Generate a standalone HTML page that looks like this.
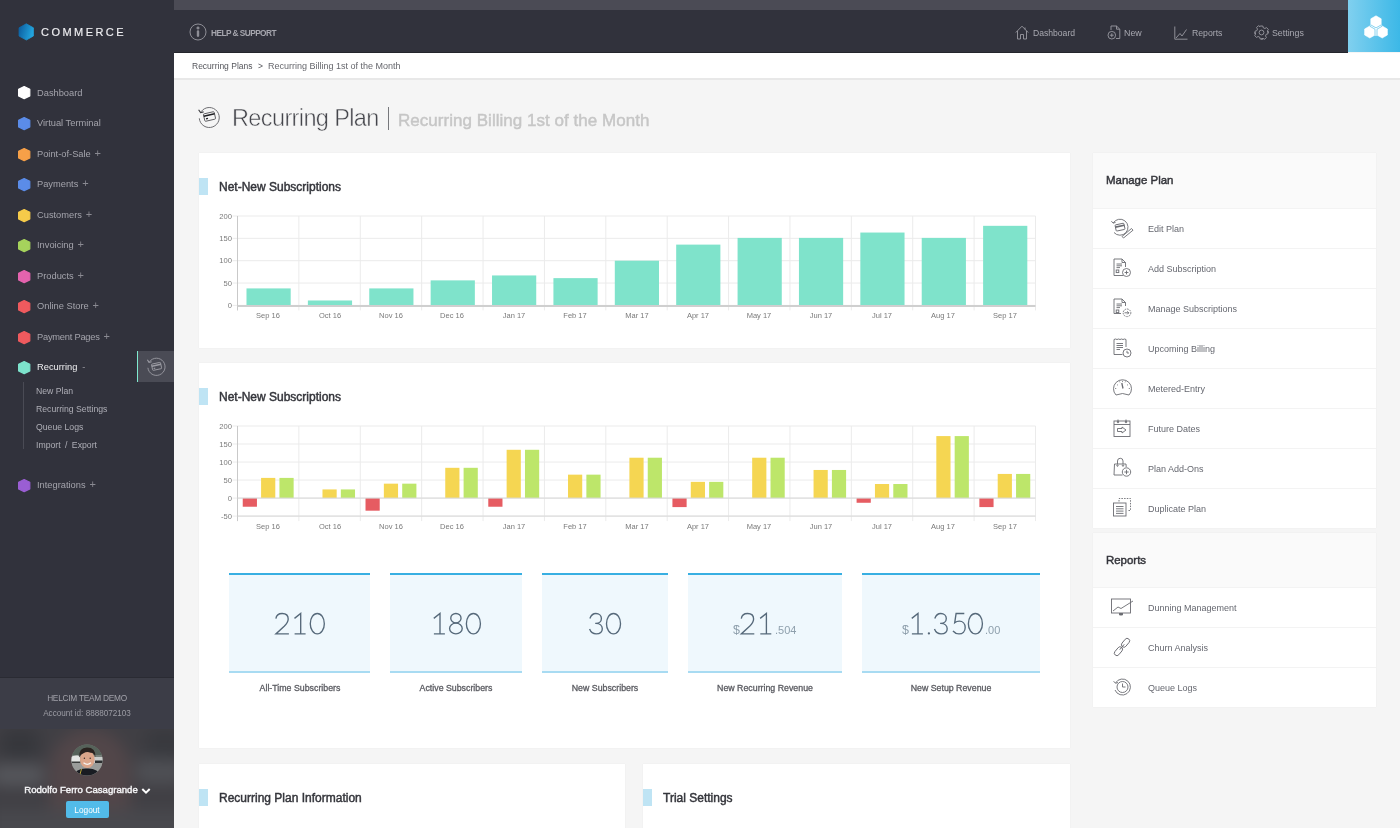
<!DOCTYPE html><html><head><meta charset="utf-8"><style>
*{margin:0;padding:0;box-sizing:border-box}
html,body{width:1400px;height:828px;overflow:hidden;background:#f5f5f5;font-family:"Liberation Sans",sans-serif;position:relative}
div,span{white-space:nowrap}
.ab{position:absolute}
.t{position:absolute;line-height:1;white-space:nowrap;will-change:transform}
#side{position:absolute;left:0;top:0;width:174px;height:828px;background:#31323c}
#top{position:absolute;left:174px;top:0;width:1174px;height:53px;background:#31323c;border-bottom:1.5px solid #24252c}
#topstrip{position:absolute;left:0;top:0;width:1174px;height:10px;background:#4b4b55}
#cube{position:absolute;left:1348px;top:0;width:52px;height:52px;background:linear-gradient(90deg,#80d0ef,#3cb8e7)}
#crumb{position:absolute;left:174px;top:53px;width:1226px;height:27px;background:#fff;border-bottom:2px solid #e8e8e8}
.card{position:absolute;background:#fff;box-shadow:0 0 1px rgba(0,0,0,0.08)}
.mark{position:absolute;left:0;width:9px;height:17px;background:#bfe4f4}
.ctitle{font-size:12px;color:#34353b;-webkit-text-stroke:0.45px #34353b}
.nav{font-size:9.3px;color:#a4a4ac}
.sub{font-size:8.7px;color:#aeaeb6}
.plus{color:#8a8a92;margin-left:3.8px;font-size:11px;line-height:0;position:relative;top:0.3px}
.panel{position:absolute;left:1093px;width:283px;background:#fff;box-shadow:0 0 1px rgba(0,0,0,0.08)}
.phead{position:absolute;left:0;top:0;width:283px;background:#fafafa}
.ptitle{font-size:11.7px;color:#34353b;-webkit-text-stroke:0.45px #34353b}
.pitem{position:absolute;left:0;width:283px;height:40px;border-top:1px solid #f3f3f3}
.pl{font-size:9px;color:#666870}
.stat{position:absolute;top:573px;height:100px;background:#eff8fd;border-top:2px solid #38afe2;border-bottom:2px solid #a8dbf2}
.num{font-size:30px;color:#71828f}
.slbl{font-size:8.8px;color:#5a5b61;-webkit-text-stroke:0.3px #5a5b61}
.cl{font-size:7.6px;color:#7a7a7a}
.ic{position:absolute;overflow:visible}
</style></head><body>
<div id="side"></div>
<svg class="ic" style="left:18px;top:23px" width="17" height="18" viewBox="0 0 17 18">
<defs><linearGradient id="lg" x1="0" y1="0" x2="1" y2="0.3"><stop offset="0" stop-color="#0b5a9c"/><stop offset="1" stop-color="#22a3dc"/></linearGradient></defs>
<path d="M8.3 0.8 L15.4 4.8 L15.4 13 L8.3 17 L1 13 L1 4.8 Z" fill="url(#lg)" stroke="url(#lg)" stroke-width="0.8" stroke-linejoin="round"/></svg>
<div class="t " style="left:41px;top:26.52px;font-size:11px;color:#f0f0f3;letter-spacing:2.45px;-webkit-text-stroke:0.15px #f0f0f3">COMMERCE</div>
<svg class="ic" style="left:18.00px;top:86.30px" width="12.4" height="13.2"><polygon points="6.20,0.6 11.80,3.30 11.80,9.90 6.20,12.60 0.6,9.90 0.6,3.30" fill="#ffffff" stroke="#ffffff" stroke-width="1.2" stroke-linejoin="round"/></svg>
<div class="t nav" style="left:37px;top:88.54px;font-size:9.3px;">Dashboard</div>
<svg class="ic" style="left:18.00px;top:117.00px" width="12.4" height="13.2"><polygon points="6.20,0.6 11.80,3.30 11.80,9.90 6.20,12.60 0.6,9.90 0.6,3.30" fill="#5b8ce8" stroke="#5b8ce8" stroke-width="1.2" stroke-linejoin="round"/></svg>
<div class="t nav" style="left:37px;top:119.24px;font-size:9.3px;">Virtual Terminal</div>
<svg class="ic" style="left:18.00px;top:147.50px" width="12.4" height="13.2"><polygon points="6.20,0.6 11.80,3.30 11.80,9.90 6.20,12.60 0.6,9.90 0.6,3.30" fill="#f7a048" stroke="#f7a048" stroke-width="1.2" stroke-linejoin="round"/></svg>
<div class="t nav" style="left:37px;top:149.74px;font-size:9.3px;">Point-of-Sale<span class="plus">+</span></div>
<svg class="ic" style="left:18.00px;top:178.00px" width="12.4" height="13.2"><polygon points="6.20,0.6 11.80,3.30 11.80,9.90 6.20,12.60 0.6,9.90 0.6,3.30" fill="#5b8ce8" stroke="#5b8ce8" stroke-width="1.2" stroke-linejoin="round"/></svg>
<div class="t nav" style="left:37px;top:180.24px;font-size:9.3px;">Payments<span class="plus">+</span></div>
<svg class="ic" style="left:18.00px;top:208.50px" width="12.4" height="13.2"><polygon points="6.20,0.6 11.80,3.30 11.80,9.90 6.20,12.60 0.6,9.90 0.6,3.30" fill="#f6cb4a" stroke="#f6cb4a" stroke-width="1.2" stroke-linejoin="round"/></svg>
<div class="t nav" style="left:37px;top:210.74px;font-size:9.3px;">Customers<span class="plus">+</span></div>
<svg class="ic" style="left:18.00px;top:239.00px" width="12.4" height="13.2"><polygon points="6.20,0.6 11.80,3.30 11.80,9.90 6.20,12.60 0.6,9.90 0.6,3.30" fill="#a6d35c" stroke="#a6d35c" stroke-width="1.2" stroke-linejoin="round"/></svg>
<div class="t nav" style="left:37px;top:241.24px;font-size:9.3px;">Invoicing<span class="plus">+</span></div>
<svg class="ic" style="left:18.00px;top:269.50px" width="12.4" height="13.2"><polygon points="6.20,0.6 11.80,3.30 11.80,9.90 6.20,12.60 0.6,9.90 0.6,3.30" fill="#e463ae" stroke="#e463ae" stroke-width="1.2" stroke-linejoin="round"/></svg>
<div class="t nav" style="left:37px;top:271.74px;font-size:9.3px;">Products<span class="plus">+</span></div>
<svg class="ic" style="left:18.00px;top:300.00px" width="12.4" height="13.2"><polygon points="6.20,0.6 11.80,3.30 11.80,9.90 6.20,12.60 0.6,9.90 0.6,3.30" fill="#ef5a5e" stroke="#ef5a5e" stroke-width="1.2" stroke-linejoin="round"/></svg>
<div class="t nav" style="left:37px;top:302.24px;font-size:9.3px;">Online Store<span class="plus">+</span></div>
<svg class="ic" style="left:18.00px;top:330.50px" width="12.4" height="13.2"><polygon points="6.20,0.6 11.80,3.30 11.80,9.90 6.20,12.60 0.6,9.90 0.6,3.30" fill="#ef5a5e" stroke="#ef5a5e" stroke-width="1.2" stroke-linejoin="round"/></svg>
<div class="t nav" style="left:37px;top:332.74px;font-size:9.3px;"><span style="letter-spacing:-0.23px">Payment Pages</span><span class="plus">+</span></div>
<svg class="ic" style="left:18.00px;top:361.10px" width="12.4" height="13.2"><polygon points="6.20,0.6 11.80,3.30 11.80,9.90 6.20,12.60 0.6,9.90 0.6,3.30" fill="#7de3cc" stroke="#7de3cc" stroke-width="1.2" stroke-linejoin="round"/></svg>
<div class="t " style="left:37px;top:363.14px;font-size:9.3px;color:#eeeef0;font-weight:normal">Recurring<span style="color:#9a9aa2;margin-left:5px">-</span></div>
<div class="ab" style="left:23px;top:382px;width:1px;height:67px;background:#4a4b55"></div>
<div class="t sub" style="left:36px;top:386.82px;font-size:8.7px;">New Plan</div>
<div class="t sub" style="left:36px;top:404.82px;font-size:8.7px;">Recurring Settings</div>
<div class="t sub" style="left:36px;top:422.82px;font-size:8.7px;">Queue Logs</div>
<div class="t sub" style="left:36px;top:440.82px;font-size:8.7px;"><span style="word-spacing:2px">Import / Export</span></div>
<svg class="ic" style="left:18.00px;top:478.90px" width="12.4" height="13.2"><polygon points="6.20,0.6 11.80,3.30 11.80,9.90 6.20,12.60 0.6,9.90 0.6,3.30" fill="#9a5ed3" stroke="#9a5ed3" stroke-width="1.2" stroke-linejoin="round"/></svg>
<div class="t nav" style="left:37px;top:481.24px;font-size:9.3px;">Integrations<span class="plus">+</span></div>
<div class="ab" style="left:137px;top:351px;width:37px;height:31px;background:#4a4b55;border-left:1.6px solid #7feacf"></div>
<svg class="ic" style="left:146px;top:356px" width="20" height="20" viewBox="0 0 20 20" fill="none" stroke="#9c9ca4" stroke-width="0.9">
<path d="M1.9 11.8 A8.6 8.6 0 1 0 3.6 5.6"/><path d="M1.4 3.8 L3.0 6.3 L5.6 5.7" stroke-width="1.1"/>
<g transform="rotate(-12 10.5 10.5)"><rect x="6" y="7.2" width="9.2" height="6.4" rx="0.8"/><path d="M6 9.2 H15.2" stroke-width="1.5"/><rect x="7.3" y="11.3" width="1.6" height="1.1" fill="#9c9ca4" stroke="none"/></g></svg>
<div class="ab" style="left:0;top:677px;width:174px;height:1px;background:#2a2b33"></div>
<div class="ab" style="left:0;top:678px;width:174px;height:51px;background:#3c3d47"></div>
<div class="t " style="left:-213px;width:600px;text-align:center;top:693.72px;font-size:8.3px;color:#a0a0a8;letter-spacing:-0.25px">HELCIM TEAM DEMO</div>
<div class="t " style="left:-213px;width:600px;text-align:center;top:709.69px;font-size:8.15px;color:#9c9ca4">Account id: 8888072103</div>
<div class="ab" style="left:0;top:729px;width:174px;height:99px;overflow:hidden;background:#403f44">
<div class="ab" style="left:-30px;top:-20px;width:234px;height:140px;filter:blur(8px);background:#403f44">
<div class="ab" style="left:80px;top:20px;width:80px;height:120px;border-radius:40px;background:#524649"></div>
<div class="ab" style="left:20px;top:55px;width:55px;height:22px;border-radius:10px;background:#56575c"></div>
<div class="ab" style="left:165px;top:50px;width:50px;height:25px;border-radius:10px;background:#4f5055"></div>
<div class="ab" style="left:20px;top:100px;width:200px;height:40px;background:#48484d"></div>
<div class="ab" style="left:30px;top:20px;width:40px;height:30px;border-radius:10px;background:#36373c"></div>
<div class="ab" style="left:175px;top:20px;width:40px;height:30px;border-radius:10px;background:#38393e"></div>
</div>
</div>
<svg class="ic" style="left:71px;top:744px" width="32" height="32" viewBox="0 0 32 32">
<defs><clipPath id="avc"><circle cx="16" cy="16" r="15.6"/></clipPath></defs>
<g clip-path="url(#avc)">
<rect width="32" height="32" fill="#77807a"/>
<rect x="0" y="0" width="32" height="11" fill="#56625a"/>
<path d="M0 13 Q2 11 7 11.5 L9 13 V19 H0 Z" fill="#e4e6e4"/>
<rect x="0" y="17.5" width="9" height="2" fill="#3a3d3c"/>
<path d="M23 13 H32 V19 H23 Z" fill="#c9cccb"/><rect x="24" y="16.5" width="8" height="2.5" fill="#2c2f30"/>
<rect x="0" y="19" width="32" height="13" fill="#9a9c9a"/>
<path d="M2 32 Q5 24 16 24.5 Q27 24 30 32 Z" fill="#191c22"/>
<path d="M10.5 25 L8.5 32" stroke="#b9a53a" stroke-width="1"/>
<ellipse cx="16.3" cy="15.3" rx="7.3" ry="8.8" fill="#dba58a"/>
<path d="M8.3 13.5 Q7.5 3.8 16 3.6 Q25 3.6 24.4 13.5 Q23.5 8.5 19.5 8.8 Q16 7.2 12.5 9.3 Q9.5 10 8.3 13.5 Z" fill="#2a221f"/>
<path d="M12.5 18.8 Q16.3 21.8 20 18.8" stroke="#f6f2f0" stroke-width="1.2" fill="none"/>
<circle cx="13.4" cy="14.2" r="0.7" fill="#3a2a25"/><circle cx="19.2" cy="14.2" r="0.7" fill="#3a2a25"/>
</g></svg>
<div class="t " style="left:-219px;width:600px;text-align:center;top:785.19px;font-size:9.6px;color:#f4f4f6;-webkit-text-stroke:0.4px #f4f4f6">Rodolfo Ferro Casagrande</div>
<svg class="ic" style="left:141px;top:787px" width="10" height="8" viewBox="0 0 10 8"><path d="M1.3 2 L5 5.6 L8.7 2" stroke="#fff" stroke-width="2" fill="none"/></svg>
<div class="ab" style="left:66px;top:801px;width:42.5px;height:17px;background:#52bbe9;border-radius:2px"></div>
<div class="t " style="left:-213px;width:600px;text-align:center;top:805.62px;font-size:8.3px;color:#fff">Logout</div>
<div id="top"><div id="topstrip"></div></div>
<div id="cube"></div>
<svg class="ic" style="left:189px;top:23px" width="18" height="18" viewBox="0 0 18 18" fill="none" stroke="#8e8e96" stroke-width="1">
<circle cx="9" cy="9" r="8"/><circle cx="9" cy="5" r="1.1" fill="#8e8e96"/><rect x="7.8" y="7.3" width="2.4" height="6.6" rx="1.1" fill="#8e8e96" stroke="none"/></svg>
<div class="t " style="left:211px;top:28.82px;font-size:8.3px;color:#a6a6ae;font-weight:bold;letter-spacing:-0.55px">HELP &amp; SUPPORT</div>
<svg class="ic" style="left:1015px;top:25px" width="14" height="15" viewBox="0 0 14 15" fill="none" stroke="#9a9aa2" stroke-width="0.9">
<path d="M0.8 7.5 L7 1.2 L13.2 7.5"/><path d="M2.5 6 V14 H5.5 V9.5 H8.5 V14 H11.5 V6"/><path d="M10 2.5 V4.5"/></svg>
<div class="t " style="left:1033px;top:28.87px;font-size:8.6px;color:#a9a9b1">Dashboard</div>
<svg class="ic" style="left:1107px;top:25px" width="14" height="15" viewBox="0 0 14 15" fill="none" stroke="#9a9aa2" stroke-width="0.9">
<path d="M4 5 V1 H9.5 L12.8 4.2 V13.5 H9"/><path d="M9.5 1 V4.2 H12.8"/><circle cx="4.8" cy="10.2" r="3.8"/><path d="M4.8 8.3 V12.1 M2.9 10.2 H6.7"/></svg>
<div class="t " style="left:1124px;top:28.75px;font-size:8.85px;color:#a9a9b1">New</div>
<svg class="ic" style="left:1174px;top:26px" width="14" height="14" viewBox="0 0 14 14" fill="none" stroke="#9a9aa2" stroke-width="0.9">
<path d="M0.8 0.5 V13.2 H13.5"/><path d="M2 12 L6 7.5 L8 10 L12.5 3.5"/></svg>
<div class="t " style="left:1191.5px;top:28.82px;font-size:8.7px;color:#a9a9b1">Reports</div>
<svg class="ic" style="left:1254px;top:25px" width="15" height="15" viewBox="0 0 15 15" fill="none" stroke="#9a9aa2" stroke-width="0.9">
<path d="M6.2 1 H8.8 L9.3 2.8 L10.9 3.5 L12.5 2.6 L14.3 4.4 L13.4 6 L14 7.6 L14.3 7.6 V7.4 L14 6.2 V8.8 L12.2 9.3 L11.5 10.9 L12.4 12.5 L10.6 14.3 L9 13.4 L7.4 14 L8.8 14 H6.2 L5.7 12.2 L4.1 11.5 L2.5 12.4 L0.7 10.6 L1.6 9 L1 7.4 V8.8 V6.2 L2.8 5.7 L3.5 4.1 L2.6 2.5 L4.4 0.7 L6 1.6 Z" stroke-linejoin="round"/><circle cx="7.5" cy="7.5" r="2.4"/></svg>
<div class="t " style="left:1271.5px;top:28.78px;font-size:8.8px;color:#a9a9b1">Settings</div>
<svg class="ic" style="left:1364px;top:15px" width="24" height="24" viewBox="0 0 24 24">
<path d="M12 0.8 L17.2 3.8 L17.2 11.5 L18.2 11 L23.4 14 L23.4 20 L18.2 23 L13 20 L12 20.6 L11 20 L5.8 23 L0.6 20 L0.6 14 L5.8 11 L6.8 11.5 L6.8 3.8 Z" fill="#fff" stroke="#fff" stroke-width="0.6" stroke-linejoin="round"/>
<path d="M6.8 9.9 L12 12.9 L17.2 9.9 M5.8 11.2 L11 14.2 V20.2 M18.2 11.2 L13 14.2 V20.2" stroke="#6ac8ec" stroke-width="0.8" fill="none"/>
</svg>
<div id="crumb"></div>
<div class="t " style="left:192.4px;top:61.82px;font-size:8.5px;color:#55565c">Recurring Plans</div>
<div class="t " style="left:258px;top:61.82px;font-size:8.5px;color:#55565c">&gt;</div>
<div class="t " style="left:267.5px;top:61.58px;font-size:9px;color:#66676d">Recurring Billing 1st of the Month</div>
<svg class="ic" style="left:197px;top:104px" width="24" height="24" viewBox="0 0 24 24" fill="none">
<path d="M2.3 14.3 A10 10 0 1 0 4.2 7.6" stroke="#6e6e72" stroke-width="1"/><path d="M1.6 5.8 L3.6 8.6 L6.6 7.9" stroke="#3a3a3e" stroke-width="1.1"/>
<g transform="rotate(-13 12.5 12.5)"><rect x="7" y="8.7" width="11" height="7.6" rx="0.9" stroke="#5a5a5e" stroke-width="0.9"/><path d="M7 11 H18" stroke="#1e1e22" stroke-width="1.5"/><rect x="8.6" y="13.4" width="2" height="1.3" fill="#1e1e22"/></g></svg>
<div class="t " style="left:232px;top:106.92px;font-size:23.5px;color:#44454b;letter-spacing:-0.62px;-webkit-text-stroke:0.5px #f5f5f5">Recurring Plan</div>
<div class="ab" style="left:387.5px;top:107px;width:1.3px;height:22.5px;background:#77787c"></div>
<div class="t " style="left:398px;top:111.64px;font-size:17px;color:#c6c6c6;letter-spacing:0.03px;-webkit-text-stroke:0.45px #c6c6c6">Recurring Billing 1st of the Month</div>
<div class="card" style="left:199px;top:153px;width:871px;height:195px"><div class="mark" style="top:25px"></div></div>
<div class="t ctitle" style="left:219px;top:180.94px;font-size:12px;">Net-New Subscriptions</div>
<div class="card" style="left:199px;top:363px;width:871px;height:385px"><div class="mark" style="top:25px"></div></div>
<div class="t ctitle" style="left:219px;top:390.94px;font-size:12px;">Net-New Subscriptions</div>
<div class="card" style="left:199px;top:764px;width:426px;height:80px"><div class="mark" style="top:25px"></div></div>
<div class="t ctitle" style="left:219px;top:791.94px;font-size:12px;">Recurring Plan Information</div>
<div class="card" style="left:643px;top:764px;width:427px;height:80px"><div class="mark" style="top:25px"></div></div>
<div class="t ctitle" style="left:663px;top:791.94px;font-size:12px;">Trial Settings</div>
<svg class="ic" style="left:200px;top:208.3px" width="870" height="119.39999999999998"><line x1="32.5" y1="97.40" x2="835.5" y2="97.40" stroke="#ebebeb" stroke-width="1"/><line x1="32.5" y1="75.05" x2="835.5" y2="75.05" stroke="#ebebeb" stroke-width="1"/><line x1="32.5" y1="52.70" x2="835.5" y2="52.70" stroke="#ebebeb" stroke-width="1"/><line x1="32.5" y1="30.35" x2="835.5" y2="30.35" stroke="#ebebeb" stroke-width="1"/><line x1="32.5" y1="8.00" x2="835.5" y2="8.00" stroke="#ebebeb" stroke-width="1"/><line x1="37.50" y1="8.00" x2="37.50" y2="102.40" stroke="#ebebeb" stroke-width="1"/><line x1="98.88" y1="8.00" x2="98.88" y2="102.40" stroke="#ebebeb" stroke-width="1"/><line x1="160.27" y1="8.00" x2="160.27" y2="102.40" stroke="#ebebeb" stroke-width="1"/><line x1="221.65" y1="8.00" x2="221.65" y2="102.40" stroke="#ebebeb" stroke-width="1"/><line x1="283.04" y1="8.00" x2="283.04" y2="102.40" stroke="#ebebeb" stroke-width="1"/><line x1="344.42" y1="8.00" x2="344.42" y2="102.40" stroke="#ebebeb" stroke-width="1"/><line x1="405.81" y1="8.00" x2="405.81" y2="102.40" stroke="#ebebeb" stroke-width="1"/><line x1="467.19" y1="8.00" x2="467.19" y2="102.40" stroke="#ebebeb" stroke-width="1"/><line x1="528.58" y1="8.00" x2="528.58" y2="102.40" stroke="#ebebeb" stroke-width="1"/><line x1="589.96" y1="8.00" x2="589.96" y2="102.40" stroke="#ebebeb" stroke-width="1"/><line x1="651.35" y1="8.00" x2="651.35" y2="102.40" stroke="#ebebeb" stroke-width="1"/><line x1="712.73" y1="8.00" x2="712.73" y2="102.40" stroke="#ebebeb" stroke-width="1"/><line x1="774.12" y1="8.00" x2="774.12" y2="102.40" stroke="#ebebeb" stroke-width="1"/><line x1="835.50" y1="8.00" x2="835.50" y2="102.40" stroke="#ebebeb" stroke-width="1"/><line x1="37.50" y1="8.00" x2="37.50" y2="102.40" stroke="#c9c9c9" stroke-width="1"/><rect x="46.49" y="80.41" width="44.2" height="16.99" fill="#7fe3cb"/><rect x="107.88" y="92.48" width="44.2" height="4.92" fill="#7fe3cb"/><rect x="169.26" y="80.41" width="44.2" height="16.99" fill="#7fe3cb"/><rect x="230.65" y="72.37" width="44.2" height="25.03" fill="#7fe3cb"/><rect x="292.03" y="67.45" width="44.2" height="29.95" fill="#7fe3cb"/><rect x="353.42" y="70.13" width="44.2" height="27.27" fill="#7fe3cb"/><rect x="414.80" y="52.70" width="44.2" height="44.70" fill="#7fe3cb"/><rect x="476.18" y="36.61" width="44.2" height="60.79" fill="#7fe3cb"/><rect x="537.57" y="29.90" width="44.2" height="67.50" fill="#7fe3cb"/><rect x="598.95" y="29.90" width="44.2" height="67.50" fill="#7fe3cb"/><rect x="660.34" y="24.54" width="44.2" height="72.86" fill="#7fe3cb"/><rect x="721.72" y="29.90" width="44.2" height="67.50" fill="#7fe3cb"/><rect x="783.11" y="17.83" width="44.2" height="79.57" fill="#7fe3cb"/><line x1="37.50" y1="97.90" x2="835.50" y2="97.90" stroke="#cfcfcf" stroke-width="2"/></svg>
<div class="t cl" style="left:-68.5px;width:300px;text-align:right;top:302.05px;font-size:7.6px;">0</div>
<div class="t cl" style="left:-68.5px;width:300px;text-align:right;top:279.70px;font-size:7.6px;">50</div>
<div class="t cl" style="left:-68.5px;width:300px;text-align:right;top:257.35px;font-size:7.6px;">100</div>
<div class="t cl" style="left:-68.5px;width:300px;text-align:right;top:235.00px;font-size:7.6px;">150</div>
<div class="t cl" style="left:-68.5px;width:300px;text-align:right;top:212.65px;font-size:7.6px;">200</div>
<div class="t cl" style="left:-31.80769230769232px;width:600px;text-align:center;top:312.40px;font-size:7.5px;">Sep 16</div>
<div class="t cl" style="left:29.576923076923094px;width:600px;text-align:center;top:312.40px;font-size:7.5px;">Oct 16</div>
<div class="t cl" style="left:90.96153846153845px;width:600px;text-align:center;top:312.40px;font-size:7.5px;">Nov 16</div>
<div class="t cl" style="left:152.34615384615387px;width:600px;text-align:center;top:312.40px;font-size:7.5px;">Dec 16</div>
<div class="t cl" style="left:213.73076923076928px;width:600px;text-align:center;top:312.40px;font-size:7.5px;">Jan 17</div>
<div class="t cl" style="left:275.11538461538464px;width:600px;text-align:center;top:312.40px;font-size:7.5px;">Feb 17</div>
<div class="t cl" style="left:336.5px;width:600px;text-align:center;top:312.40px;font-size:7.5px;">Mar 17</div>
<div class="t cl" style="left:397.8846153846155px;width:600px;text-align:center;top:312.40px;font-size:7.5px;">Apr 17</div>
<div class="t cl" style="left:459.26923076923083px;width:600px;text-align:center;top:312.40px;font-size:7.5px;">May 17</div>
<div class="t cl" style="left:520.6538461538462px;width:600px;text-align:center;top:312.40px;font-size:7.5px;">Jun 17</div>
<div class="t cl" style="left:582.0384615384615px;width:600px;text-align:center;top:312.40px;font-size:7.5px;">Jul 17</div>
<div class="t cl" style="left:643.4230769230769px;width:600px;text-align:center;top:312.40px;font-size:7.5px;">Aug 17</div>
<div class="t cl" style="left:704.8076923076924px;width:600px;text-align:center;top:312.40px;font-size:7.5px;">Sep 17</div>
<svg class="ic" style="left:200px;top:418.4px" width="870" height="120.10000000000002"><line x1="32.5" y1="98.10" x2="835.5" y2="98.10" stroke="#ebebeb" stroke-width="1"/><line x1="32.5" y1="80.08" x2="835.5" y2="80.08" stroke="#ebebeb" stroke-width="1"/><line x1="32.5" y1="62.06" x2="835.5" y2="62.06" stroke="#ebebeb" stroke-width="1"/><line x1="32.5" y1="44.04" x2="835.5" y2="44.04" stroke="#ebebeb" stroke-width="1"/><line x1="32.5" y1="26.02" x2="835.5" y2="26.02" stroke="#ebebeb" stroke-width="1"/><line x1="32.5" y1="8.00" x2="835.5" y2="8.00" stroke="#ebebeb" stroke-width="1"/><line x1="37.50" y1="8.00" x2="37.50" y2="103.10" stroke="#ebebeb" stroke-width="1"/><line x1="98.88" y1="8.00" x2="98.88" y2="103.10" stroke="#ebebeb" stroke-width="1"/><line x1="160.27" y1="8.00" x2="160.27" y2="103.10" stroke="#ebebeb" stroke-width="1"/><line x1="221.65" y1="8.00" x2="221.65" y2="103.10" stroke="#ebebeb" stroke-width="1"/><line x1="283.04" y1="8.00" x2="283.04" y2="103.10" stroke="#ebebeb" stroke-width="1"/><line x1="344.42" y1="8.00" x2="344.42" y2="103.10" stroke="#ebebeb" stroke-width="1"/><line x1="405.81" y1="8.00" x2="405.81" y2="103.10" stroke="#ebebeb" stroke-width="1"/><line x1="467.19" y1="8.00" x2="467.19" y2="103.10" stroke="#ebebeb" stroke-width="1"/><line x1="528.58" y1="8.00" x2="528.58" y2="103.10" stroke="#ebebeb" stroke-width="1"/><line x1="589.96" y1="8.00" x2="589.96" y2="103.10" stroke="#ebebeb" stroke-width="1"/><line x1="651.35" y1="8.00" x2="651.35" y2="103.10" stroke="#ebebeb" stroke-width="1"/><line x1="712.73" y1="8.00" x2="712.73" y2="103.10" stroke="#ebebeb" stroke-width="1"/><line x1="774.12" y1="8.00" x2="774.12" y2="103.10" stroke="#ebebeb" stroke-width="1"/><line x1="835.50" y1="8.00" x2="835.50" y2="103.10" stroke="#ebebeb" stroke-width="1"/><line x1="37.50" y1="8.00" x2="37.50" y2="103.10" stroke="#c9c9c9" stroke-width="1"/><rect x="42.74" y="80.08" width="14.2" height="8.65" fill="#e65c62"/><rect x="61.09" y="59.90" width="14.2" height="20.18" fill="#f5d652"/><rect x="79.44" y="59.90" width="14.2" height="20.18" fill="#bde66a"/><rect x="122.48" y="71.43" width="14.2" height="8.65" fill="#f5d652"/><rect x="140.83" y="71.43" width="14.2" height="8.65" fill="#bde66a"/><rect x="165.51" y="80.08" width="14.2" height="12.61" fill="#e65c62"/><rect x="183.86" y="65.66" width="14.2" height="14.42" fill="#f5d652"/><rect x="202.21" y="65.66" width="14.2" height="14.42" fill="#bde66a"/><rect x="245.25" y="49.81" width="14.2" height="30.27" fill="#f5d652"/><rect x="263.60" y="49.81" width="14.2" height="30.27" fill="#bde66a"/><rect x="288.28" y="80.08" width="14.2" height="8.65" fill="#e65c62"/><rect x="306.63" y="31.79" width="14.2" height="48.29" fill="#f5d652"/><rect x="324.98" y="31.79" width="14.2" height="48.29" fill="#bde66a"/><rect x="368.02" y="56.65" width="14.2" height="23.43" fill="#f5d652"/><rect x="386.37" y="56.65" width="14.2" height="23.43" fill="#bde66a"/><rect x="429.40" y="39.72" width="14.2" height="40.36" fill="#f5d652"/><rect x="447.75" y="39.72" width="14.2" height="40.36" fill="#bde66a"/><rect x="472.43" y="80.08" width="14.2" height="9.01" fill="#e65c62"/><rect x="490.78" y="63.86" width="14.2" height="16.22" fill="#f5d652"/><rect x="509.13" y="63.86" width="14.2" height="16.22" fill="#bde66a"/><rect x="552.17" y="39.72" width="14.2" height="40.36" fill="#f5d652"/><rect x="570.52" y="39.72" width="14.2" height="40.36" fill="#bde66a"/><rect x="613.55" y="51.97" width="14.2" height="28.11" fill="#f5d652"/><rect x="631.90" y="51.97" width="14.2" height="28.11" fill="#bde66a"/><rect x="656.59" y="80.08" width="14.2" height="4.69" fill="#e65c62"/><rect x="674.94" y="66.02" width="14.2" height="14.06" fill="#f5d652"/><rect x="693.29" y="66.02" width="14.2" height="14.06" fill="#bde66a"/><rect x="736.32" y="18.09" width="14.2" height="61.99" fill="#f5d652"/><rect x="754.67" y="18.09" width="14.2" height="61.99" fill="#bde66a"/><rect x="779.36" y="80.08" width="14.2" height="9.01" fill="#e65c62"/><rect x="797.71" y="55.93" width="14.2" height="24.15" fill="#f5d652"/><rect x="816.06" y="55.93" width="14.2" height="24.15" fill="#bde66a"/><line x1="37.50" y1="80.08" x2="835.50" y2="80.08" stroke="#d8d8d8" stroke-width="1"/><line x1="37.50" y1="98.10" x2="835.50" y2="98.10" stroke="#d8d8d8" stroke-width="1"/></svg>
<div class="t cl" style="left:-68.5px;width:300px;text-align:right;top:512.85px;font-size:7.6px;">-50</div>
<div class="t cl" style="left:-68.5px;width:300px;text-align:right;top:494.83px;font-size:7.6px;">0</div>
<div class="t cl" style="left:-68.5px;width:300px;text-align:right;top:476.81px;font-size:7.6px;">50</div>
<div class="t cl" style="left:-68.5px;width:300px;text-align:right;top:458.79px;font-size:7.6px;">100</div>
<div class="t cl" style="left:-68.5px;width:300px;text-align:right;top:440.77px;font-size:7.6px;">150</div>
<div class="t cl" style="left:-68.5px;width:300px;text-align:right;top:422.75px;font-size:7.6px;">200</div>
<div class="t cl" style="left:-31.80769230769232px;width:600px;text-align:center;top:522.60px;font-size:7.5px;">Sep 16</div>
<div class="t cl" style="left:29.576923076923094px;width:600px;text-align:center;top:522.60px;font-size:7.5px;">Oct 16</div>
<div class="t cl" style="left:90.96153846153845px;width:600px;text-align:center;top:522.60px;font-size:7.5px;">Nov 16</div>
<div class="t cl" style="left:152.34615384615387px;width:600px;text-align:center;top:522.60px;font-size:7.5px;">Dec 16</div>
<div class="t cl" style="left:213.73076923076928px;width:600px;text-align:center;top:522.60px;font-size:7.5px;">Jan 17</div>
<div class="t cl" style="left:275.11538461538464px;width:600px;text-align:center;top:522.60px;font-size:7.5px;">Feb 17</div>
<div class="t cl" style="left:336.5px;width:600px;text-align:center;top:522.60px;font-size:7.5px;">Mar 17</div>
<div class="t cl" style="left:397.8846153846155px;width:600px;text-align:center;top:522.60px;font-size:7.5px;">Apr 17</div>
<div class="t cl" style="left:459.26923076923083px;width:600px;text-align:center;top:522.60px;font-size:7.5px;">May 17</div>
<div class="t cl" style="left:520.6538461538462px;width:600px;text-align:center;top:522.60px;font-size:7.5px;">Jun 17</div>
<div class="t cl" style="left:582.0384615384615px;width:600px;text-align:center;top:522.60px;font-size:7.5px;">Jul 17</div>
<div class="t cl" style="left:643.4230769230769px;width:600px;text-align:center;top:522.60px;font-size:7.5px;">Aug 17</div>
<div class="t cl" style="left:704.8076923076924px;width:600px;text-align:center;top:522.60px;font-size:7.5px;">Sep 17</div>
<div class="stat" style="left:229px;width:141px"></div>
<div class="t slbl" style="left:-0.5px;width:600px;text-align:center;top:684.08px;font-size:8.8px;">All-Time Subscribers</div>
<div class="stat" style="left:389.5px;width:132.5px"></div>
<div class="t slbl" style="left:155.75px;width:600px;text-align:center;top:684.08px;font-size:8.8px;">Active Subscribers</div>
<div class="stat" style="left:542px;width:126px"></div>
<div class="t slbl" style="left:305.0px;width:600px;text-align:center;top:684.08px;font-size:8.8px;">New Subscribers</div>
<div class="stat" style="left:688px;width:154px"></div>
<div class="t slbl" style="left:465.0px;width:600px;text-align:center;top:684.08px;font-size:8.8px;">New Recurring Revenue</div>
<div class="stat" style="left:862px;width:178px"></div>
<div class="t slbl" style="left:651.0px;width:600px;text-align:center;top:684.08px;font-size:8.8px;">New Setup Revenue</div>
<svg class="ic" style="left:0;top:0" width="1100" height="700" fill="none" stroke="#56697a" stroke-width="1.35"><g transform="translate(275.00,612.8)"><path d="M0.9,5.8 C1.3,2.6 4,0.68 7.2,0.68 C10.9,0.68 13.2,3 13.2,6.2 C13.2,9 11.6,11 9.2,13.4 L0.9,21.12 H13.9"/></g><g transform="translate(293.80,612.8)"><path d="M0.68,5.6 L6.9,0.68 V21.12 M0.8,21.12 H11.8"/></g><g transform="translate(309.60,612.8)"><ellipse cx="7.7" cy="10.9" rx="7.02" ry="10.22"/></g><g transform="translate(433.10,612.8)"><path d="M0.68,5.6 L6.9,0.68 V21.12 M0.8,21.12 H11.8"/></g><g transform="translate(448.90,612.8)"><ellipse cx="7" cy="5.35" rx="5.15" ry="4.67"/><ellipse cx="7" cy="15.75" rx="6.32" ry="5.37"/></g><g transform="translate(465.70,612.8)"><ellipse cx="7.7" cy="10.9" rx="7.02" ry="10.22"/></g><g transform="translate(588.90,612.8)"><path d="M1.0,5.7 C2.2,2.3 4.5,0.68 7.0,0.68 C10.2,0.68 12.5,2.8 12.5,5.6 C12.5,8.6 10.2,10.6 7.0,10.6 H6.3 M7.0,10.6 C11,10.6 13.4,13 13.4,16 C13.4,19.2 10.8,21.12 7.2,21.12 C4.3,21.12 2.0,19.7 0.68,16.3"/></g><g transform="translate(605.80,612.8)"><ellipse cx="7.7" cy="10.9" rx="7.02" ry="10.22"/></g><g transform="translate(740.40,612.8)"><path d="M0.9,5.8 C1.3,2.6 4,0.68 7.2,0.68 C10.9,0.68 13.2,3 13.2,6.2 C13.2,9 11.6,11 9.2,13.4 L0.9,21.12 H13.9"/></g><g transform="translate(759.50,612.8)"><path d="M0.68,5.6 L6.9,0.68 V21.12 M0.8,21.12 H11.8"/></g><g transform="translate(911.10,612.8)"><path d="M0.68,5.6 L6.9,0.68 V21.12 M0.8,21.12 H11.8"/></g><g transform="translate(927.80,612.8)"><circle cx="1.1" cy="20.6" r="1.15" fill="#56697a" stroke="none"/></g><g transform="translate(933.80,612.8)"><path d="M1.0,5.7 C2.2,2.3 4.5,0.68 7.0,0.68 C10.2,0.68 12.5,2.8 12.5,5.6 C12.5,8.6 10.2,10.6 7.0,10.6 H6.3 M7.0,10.6 C11,10.6 13.4,13 13.4,16 C13.4,19.2 10.8,21.12 7.2,21.12 C4.3,21.12 2.0,19.7 0.68,16.3"/></g><g transform="translate(952.30,612.8)"><path d="M12.0,0.68 H3.8 L2.4,10.0 C3.7,9.0 5.2,8.4 7.0,8.4 C10.4,8.4 12.9,10.9 12.9,14.7 C12.9,18.6 10.3,21.12 6.7,21.12 C4.2,21.12 2.3,20.1 0.68,18.2"/></g><g transform="translate(967.70,612.8)"><ellipse cx="7.7" cy="10.9" rx="7.02" ry="10.22"/></g></svg>
<div class="t" style="left:732.5px;top:623.5px;font-size:12.5px;color:#8d9eab;line-height:1">$</div>
<div class="t " style="left:774.5px;top:625.12px;font-size:11px;color:#8fa0ad">.504</div>
<div class="t" style="left:901.5px;top:623.5px;font-size:12.5px;color:#8d9eab;line-height:1">$</div>
<div class="t " style="left:985px;top:625.12px;font-size:11px;color:#8fa0ad">.00</div>
<div class="panel" style="top:153px;height:375px"><div class="phead" style="height:55px"></div></div>
<div class="t ptitle" style="left:1105.5px;top:175.20px;font-size:11.45px;">Manage Plan</div>
<div class="pitem" style="left:1093px;top:208px"></div>
<svg class="ic" style="left:1110px;top:217px" width="24" height="21" viewBox="0 0 24 21" fill="none" stroke="#6a6b71" stroke-width="0.9">
<path d="M3.2 6 A8 8 0 1 1 4 15.5"/><path d="M1.4 4.2 L3.2 6.2 L5.6 5.3"/>
<g transform="rotate(-12 10 10)"><rect x="5.5" y="7" width="9" height="6.3" rx="0.8"/><path d="M5.5 9.2 H14.5" stroke-width="1.6"/></g>
<path d="M12 19.5 L21.5 11.5 L23 13.2 L13.5 21 Z"/></svg>
<div class="t pl" style="left:1147.8px;top:224.78px;font-size:9px;">Edit Plan</div>
<div class="pitem" style="left:1093px;top:248px"></div>
<svg class="ic" style="left:1112px;top:258px" width="20" height="20" viewBox="0 0 20 20" fill="none" stroke="#6a6b71" stroke-width="0.9">
<path d="M11 17.5 H2 V1 H10 L13.5 4.5 V9"/><path d="M10 1 V4.5 H13.5"/><path d="M4.5 6 H10 M4.5 7.8 H10 M4.5 9.6 H8"/><rect x="4.2" y="12" width="2.6" height="2.6"/>
<circle cx="14.5" cy="14.5" r="4"/><path d="M14.5 12.6 V16.4 M12.6 14.5 H16.4"/></svg>
<div class="t pl" style="left:1147.8px;top:264.78px;font-size:9px;">Add Subscription</div>
<div class="pitem" style="left:1093px;top:288px"></div>
<svg class="ic" style="left:1112px;top:298px" width="21" height="20" viewBox="0 0 21 20" fill="none" stroke="#6a6b71" stroke-width="0.9">
<path d="M9 15.5 H2 V1 H10 L13.5 4.5 V8"/><path d="M10 1 V4.5 H13.5"/><path d="M4.5 6 H10 M4.5 7.8 H10 M4.5 9.6 H8"/><rect x="4.2" y="12" width="2.6" height="2.6"/>
<circle cx="15" cy="14.8" r="3.8" stroke-dasharray="1.6 0.9"/><path d="M12.5 14.8 H16.8 M15.3 13.3 L16.8 14.8 L15.3 16.3"/></svg>
<div class="t pl" style="left:1147.8px;top:304.78px;font-size:9px;">Manage Subscriptions</div>
<div class="pitem" style="left:1093px;top:328px"></div>
<svg class="ic" style="left:1112px;top:338px" width="21" height="20" viewBox="0 0 21 20" fill="none" stroke="#6a6b71" stroke-width="0.9">
<path d="M10.5 16.5 H2 V1.5 L3.5 1 L5 1.5 L6.5 1 L8 1.5 L9.5 1 L11 1.5 L12.5 1 L14 1.5 V9"/><path d="M4.5 5.5 H11 M4.5 7.5 H11 M4.5 9.5 H11 M4.5 11.5 H8"/>
<circle cx="15" cy="15" r="4"/><path d="M15 12.8 V15 H17"/></svg>
<div class="t pl" style="left:1147.8px;top:344.78px;font-size:9px;">Upcoming Billing</div>
<div class="pitem" style="left:1093px;top:368px"></div>
<svg class="ic" style="left:1112px;top:378px" width="21" height="20" viewBox="0 0 21 20" fill="none" stroke="#6a6b71" stroke-width="0.9">
<path d="M4 17 A9 9 0 1 1 17 17"/><path d="M4 17 Q10.5 14 17 17"/><path d="M9.8 5 L11 10.5" stroke-width="1.3"/>
<path d="M5 6.5 L5.8 7.2 M3.2 10.5 H4.2 M16 6.5 L15.2 7.2 M17.8 10.5 H16.8 M10.5 2.8 V3.8 M7.5 3.5 L7.9 4.3 M13.5 3.5 L13.1 4.3"/></svg>
<div class="t pl" style="left:1147.8px;top:384.78px;font-size:9px;">Metered-Entry</div>
<div class="pitem" style="left:1093px;top:408px"></div>
<svg class="ic" style="left:1112px;top:418px" width="20" height="20" viewBox="0 0 20 20" fill="none" stroke="#6a6b71" stroke-width="0.9">
<rect x="2" y="3" width="16" height="15.5"/><path d="M2 6.5 H18"/><path d="M6 1.5 V4.5 M14 1.5 V4.5"/><circle cx="6" cy="4" r="0.8"/><circle cx="14" cy="4" r="0.8"/>
<path d="M5.5 10.5 H10 V9 L14 12 L10 15 V13.5 H5.5 Z"/></svg>
<div class="t pl" style="left:1147.8px;top:424.78px;font-size:9px;">Future Dates</div>
<div class="pitem" style="left:1093px;top:448px"></div>
<svg class="ic" style="left:1112px;top:456px" width="21" height="22" viewBox="0 0 21 22" fill="none" stroke="#6a6b71" stroke-width="0.9">
<path d="M10.5 19 H2 L2.5 8 H14 L14.2 11"/><path d="M5.5 8 V5 A2.7 2.7 0 0 1 11 5 V8"/><circle cx="5.5" cy="9.6" r="0.7"/><circle cx="11" cy="9.6" r="0.7"/>
<circle cx="14.5" cy="16" r="4.2"/><path d="M14.5 13.8 V18.2 M12.3 16 H16.7"/></svg>
<div class="t pl" style="left:1147.8px;top:464.78px;font-size:9px;">Plan Add-Ons</div>
<div class="pitem" style="left:1093px;top:488px"></div>
<svg class="ic" style="left:1112px;top:497px" width="21" height="21" viewBox="0 0 21 21" fill="none" stroke="#6a6b71" stroke-width="0.9">
<path d="M7 4.5 V1.5 H18.5 V13.5 H15.5" stroke-dasharray="1.5 1.2"/><rect x="1.5" y="6" width="12.5" height="13"/><path d="M4 9.5 H11.5 M4 11.8 H11.5 M4 14.1 H11.5 M4 16.4 H11.5"/></svg>
<div class="t pl" style="left:1147.8px;top:504.78px;font-size:9px;">Duplicate Plan</div>
<div class="panel" style="top:533px;height:174px"><div class="phead" style="height:54px"></div></div>
<div class="t ptitle" style="left:1105.5px;top:555.20px;font-size:11.45px;">Reports</div>
<div class="pitem" style="left:1093px;top:587px"></div>
<svg class="ic" style="left:1110px;top:597px" width="24" height="20" viewBox="0 0 24 20" fill="none" stroke="#6a6b71" stroke-width="0.9">
<rect x="1.5" y="2" width="19" height="14"/><path d="M9.5 16 V18 H12.5 V16" fill="#6a6b71"/><path d="M3 14 L8 10 L11 11.5 L23 4"/></svg>
<div class="t pl" style="left:1147.8px;top:603.78px;font-size:9px;">Dunning Management</div>
<div class="pitem" style="left:1093px;top:627px"></div>
<svg class="ic" style="left:1112px;top:637px" width="20" height="20" viewBox="0 0 20 20" fill="none" stroke="#6a6b71" stroke-width="0.9">
<g transform="rotate(-50 10 10)"><rect x="-0.5" y="7.5" width="10" height="5" rx="2.5"/><rect x="10.5" y="7.5" width="10" height="5" rx="2.5"/><path d="M6.5 10 H13.5"/></g></svg>
<div class="t pl" style="left:1147.8px;top:643.78px;font-size:9px;">Churn Analysis</div>
<div class="pitem" style="left:1093px;top:667px"></div>
<svg class="ic" style="left:1112px;top:677px" width="20" height="20" viewBox="0 0 20 20" fill="none" stroke="#6a6b71" stroke-width="0.9">
<path d="M3.5 6 A8 8 0 1 1 3 13"/><path d="M1.6 4.2 L3.5 6.3 L6 5.5"/><circle cx="10.5" cy="10" r="5.5"/><path d="M10.5 6.5 V10 H13.5"/></svg>
<div class="t pl" style="left:1147.8px;top:683.78px;font-size:9px;">Queue Logs</div>
</body></html>
